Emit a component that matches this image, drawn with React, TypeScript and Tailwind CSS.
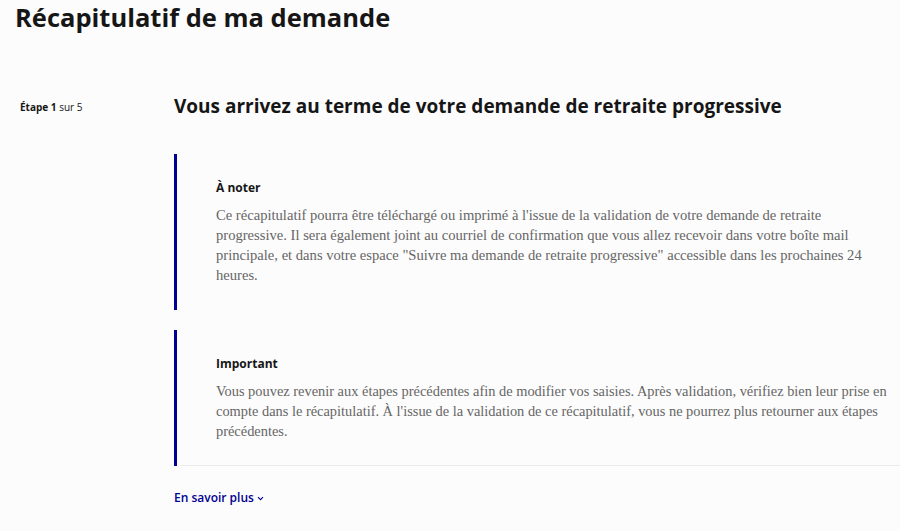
import React from "react";

export default function App() {
  return (
    <div className="min-h-[531px] w-[900px] overflow-hidden bg-[#fcfcfc] font-['Open_Sans',sans-serif] text-[#161616]">
      <h1 className="pl-[15px] pt-[0px] text-[25.5px] font-bold leading-[34px]">Récapitulatif de ma demande</h1>
      <div className="mt-[58px] flex">
        <div className="w-[174px] shrink-0 pl-[20px] pt-[8px] text-[10px] leading-[14px]">
          <span className="font-bold">Étape 1</span> <span className="font-medium">sur 5</span>
        </div>
        <div className="min-w-0 flex-1">
          <h2 className="text-[19px] font-bold leading-[28px]">Vous arrivez au terme de votre demande de retraite progressive</h2>
          <div className="mt-[34px] border-l-[3px] border-[#000091] pl-[39px] pr-[6px] pt-[26px] pb-[25px]">
            <h3 className="text-[12px] font-bold leading-[16px]">À noter</h3>
            <p className="mt-[9px] whitespace-nowrap font-['Liberation_Serif',serif] text-[14.6px] leading-[20px] text-[#666666]">
              Ce récapitulatif pourra être téléchargé ou imprimé à l'issue de la validation de votre demande de retraite
              <br />
              progressive. Il sera également joint au courriel de confirmation que vous allez recevoir dans votre boîte mail
              <br />
              principale, et dans votre espace "Suivre ma demande de retraite progressive" accessible dans les prochaines 24
              <br />
              heures.
            </p>
          </div>
          <div className="mt-[20px] border-l-[3px] border-[#000091]">
            <div className="ml-[4px] border-b border-[#ebebeb] pl-[35px] pr-[6px] pt-[26px] pb-[24px]">
              <h3 className="text-[12px] font-bold leading-[16px]">Important</h3>
              <p className="mt-[9px] whitespace-nowrap font-['Liberation_Serif',serif] text-[14.4px] leading-[20px] text-[#666666]">
                Vous pouvez revenir aux étapes précédentes afin de modifier vos saisies. Après validation, vérifiez bien leur prise en
                <br />
                compte dans le récapitulatif. À l'issue de la validation de ce récapitulatif, vous ne pourrez plus retourner aux étapes
                <br />
                précédentes.
              </p>
            </div>
          </div>
          <button className="mt-[24px] flex items-center gap-[3px] text-[12px] font-semibold leading-[16px] text-[#000091]">
            En savoir plus
            <svg width="7" height="5" viewBox="0 0 7 5" fill="none">
              <path d="M1 1.2 L3.5 3.7 L6 1.2" stroke="#000091" strokeWidth="1.1" />
            </svg>
          </button>
        </div>
      </div>
    </div>
  );
}
